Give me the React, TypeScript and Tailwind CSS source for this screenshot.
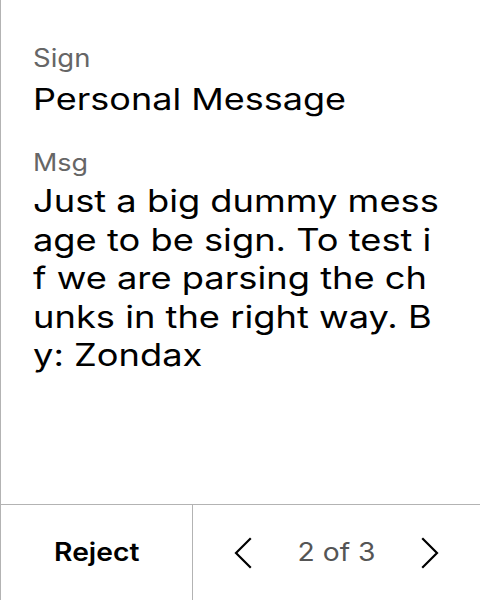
import React from 'react';

const Chevron: React.FC<{ dir: 'left' | 'right' }> = ({ dir }) => (
  <svg width="18" height="32" viewBox="0 0 18 32" fill="none" stroke="#000" strokeWidth="2.2" strokeLinecap="square">
    {dir === 'left' ? <path d="M16 2 L2 16 L16 30" /> : <path d="M2 2 L16 16 L2 30" />}
  </svg>
);

// the screen is stretched horizontally, so text is widened with scale-x
const App: React.FC = () => {
  return (
    <div
      className="w-[480px] h-[600px] bg-white flex flex-col border-l border-[#b3b3b3] text-black overflow-hidden"
      style={{ fontFamily: 'Inter, "Noto Sans", sans-serif' }}
    >
      <div className="flex-1 pl-[32px] pt-[43px]">
        <div className="text-[25px] leading-[30px] text-[#666] origin-left scale-x-[1.1]">Sign</div>
        <div className="text-[30px] leading-[36px] mt-[8px] origin-left scale-x-[1.2]">Personal Message</div>
        <div className="text-[24px] leading-[30px] text-[#666] mt-[31px] origin-left scale-x-[1.12]">Msg</div>
        <div className="w-[349px] text-[31px] leading-[38.5px] break-all mt-[4px] origin-left scale-x-[1.17]">
          Just a big dummy message to be sign. To test if we are parsing the chunks in the right way. By: Zondax
        </div>
      </div>
      <div className="h-[96px] flex border-t border-[#b3b3b3]">
        <div className="w-[192px] border-r border-[#b3b3b3] flex items-center justify-center">
          <span className="text-[25px] font-semibold scale-x-[1.13]">Reject</span>
        </div>
        <div className="flex-1 flex items-center justify-between px-[41px]">
          <Chevron dir="left" />
          <span className="text-[25px] text-[#555] scale-x-[1.13]">2 of 3</span>
          <Chevron dir="right" />
        </div>
      </div>
    </div>
  );
};

export default App;
